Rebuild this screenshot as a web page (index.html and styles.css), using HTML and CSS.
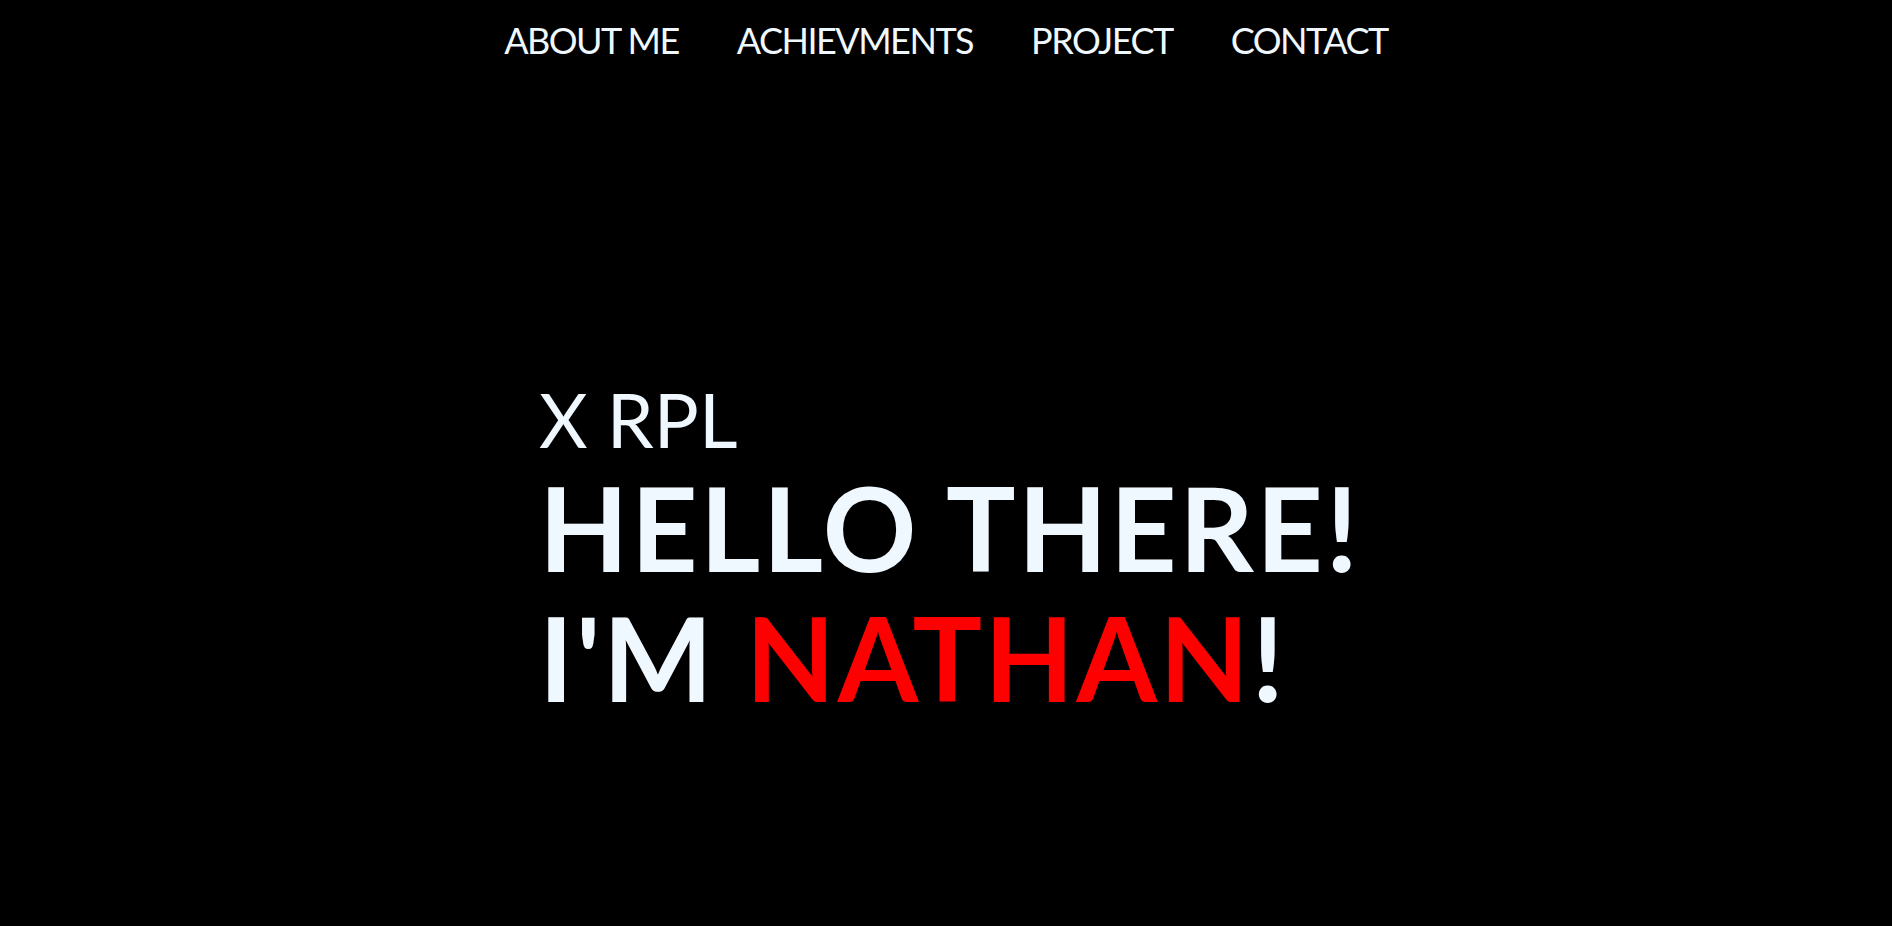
FILE: index.html
```html
<!DOCTYPE html>
<html lang="en">
<head>
<meta charset="utf-8">
<title>Nathan</title>
<link rel="stylesheet" href="styles.css">
</head>
<body>
<header class="nav">
  <a class="nav-link" href="#about">ABOUT ME</a>
  <a class="nav-link" href="#achievments">ACHIEVMENTS</a>
  <a class="nav-link" href="#project">PROJECT</a>
  <a class="nav-link" href="#contact">CONTACT</a>
</header>
<main class="hero">
  <div class="hero-text">
    <p class="class-name">X RPL</p>
    <h1 class="title">HELLO THERE!<br>I'M <span class="name">NATHAN</span>!</h1>
  </div>
</main>
</body>
</html>
```

FILE: styles.css
```css
html, body {
  margin: 0;
  padding: 0;
  background: #000;
  height: 100%;
}
body {
  font-family: "Lato", "Open Sans", sans-serif;
  color: aliceblue;
}
.nav {
  display: flex;
  justify-content: center;
  gap: 58px;
  padding-top: 16px;
}
.nav-link {
  color: aliceblue;
  text-decoration: none;
  font-size: 36px;
  line-height: 48px;
  letter-spacing: -1.5px;
}
.hero {
  display: flex;
  padding-left: 539px;
  padding-top: 312px;
}
.class-name {
  margin: 0;
  font-size: 75px;
  line-height: 87px;
}
.title {
  margin: 0;
  font-size: 116px;
  line-height: 130px;
  font-weight: 700;
  letter-spacing: 2.5px;
}
.name {
  color: #ff0000;
}
```
